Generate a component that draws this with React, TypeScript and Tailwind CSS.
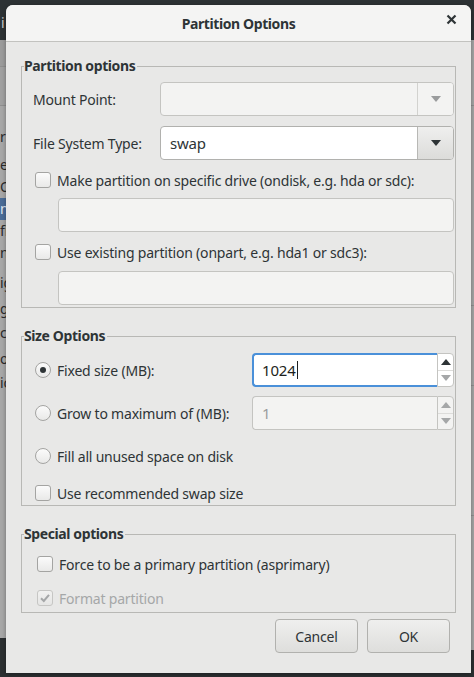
import React from 'react';

const font = { fontFamily: '"Noto Sans", "DejaVu Sans", sans-serif' };

function Arrow({ up = false, color }: { up?: boolean; color: string }) {
  return (
    <svg width="10" height="6" viewBox="0 0 10 6">
      <path d={up ? 'M0 6 L5 0 L10 6 Z' : 'M0 0 L10 0 L5 6 Z'} fill={color} />
    </svg>
  );
}

function Check({ checked = false, disabled = false }: { checked?: boolean; disabled?: boolean }) {
  return (
    <span
      className={
        'flex h-[16px] w-[16px] shrink-0 items-center justify-center rounded-[3px] border bg-gradient-to-b ' +
        (disabled ? 'border-[#c6c6c4] from-[#f1f1f0] to-[#e6e6e5]' : 'border-[#a4a4a2] from-[#fbfbfb] to-[#e9e9e8]')
      }
    >
      {checked && (
        <svg width="12" height="12" viewBox="0 0 12 12">
          <path d="M2 6.2 L4.8 9 L10 2.8" stroke={disabled ? '#a5a7a8' : '#2e3436'} strokeWidth="2" fill="none" />
        </svg>
      )}
    </span>
  );
}

function Radio({ on = false }: { on?: boolean }) {
  return (
    <span className="flex h-[16px] w-[16px] shrink-0 items-center justify-center rounded-full border border-[#a4a4a2] bg-gradient-to-b from-[#fbfbfb] to-[#e9e9e8]">
      {on && <span className="h-[6px] w-[6px] rounded-full bg-[#2e3436]" />}
    </span>
  );
}

function Combo({ value, disabled = false }: { value?: string; disabled?: boolean }) {
  return (
    <div
      className={
        'flex h-[34px] w-[294px] overflow-hidden rounded-[4px] border ' +
        (disabled ? 'border-[#c4c4c1] bg-[#f3f3f2]' : 'border-[#b1b1ae] bg-white')
      }
    >
      <div className="flex flex-1 items-center pl-[9px] text-[15px] text-[#2e3436]">{value}</div>
      <div
        className={
          'flex w-[36px] items-center justify-center border-l ' +
          (disabled ? 'border-[#d2d2cf] bg-[#f3f3f2]' : 'border-[#b8b8b5] bg-gradient-to-b from-[#efefee] to-[#dcdcda]')
        }
      >
        <Arrow color={disabled ? '#9a9c9d' : '#2e3436'} />
      </div>
    </div>
  );
}

function Spin({ value, focused = false }: { value: string; focused?: boolean }) {
  return (
    <div className="flex h-[34px] w-[202px]">
      <div
        className={
          'flex flex-1 items-center rounded-l-[4px] text-[15px] ' +
          (focused
            ? 'border-2 border-r-0 border-[#4a90d9] bg-white pl-[8px] text-[#1d1f20]'
            : 'border border-r-0 border-[#c4c4c1] bg-[#f3f3f2] pl-[9px] text-[#9a9c9d]')
        }
      >
        {value}
        {focused && <span className="ml-[1px] h-[18px] w-[1px] bg-[#1d1f20]" />}
      </div>
      <div
        className={
          'flex w-[17px] flex-col rounded-r-[4px] border border-[#c4c4c1] ' + (focused ? 'bg-white' : 'bg-[#f3f3f2]')
        }
      >
        <div className="flex flex-1 items-center justify-center border-b border-[#dcdcda]">
          <Arrow up color={focused ? '#2e3436' : '#a5a7a8'} />
        </div>
        <div className="flex flex-1 items-center justify-center">
          <Arrow color="#a5a7a8" />
        </div>
      </div>
    </div>
  );
}

function Entry() {
  return <div className="ml-[36px] h-[34px] w-[396px] rounded-[4px] border border-[#c4c4c1] bg-[#f3f3f2]" />;
}

function Frame({ title, children, className = '' }: { title: string; children: React.ReactNode; className?: string }) {
  return (
    <fieldset className={'border border-[#b8b8b5] ' + className}>
      <legend className="ml-[2px] pr-[2px] text-[14px] font-bold leading-[18px] tracking-[-0.4px] text-[#2e3436]">
        {title}
      </legend>
      {children}
    </fieldset>
  );
}

export default function App() {
  return (
    <div className="relative h-[677px] w-[474px] overflow-hidden bg-[#2b2f31]" style={font}>
      {/* dimmed parent window behind the dialog */}
      <div className="flex h-full flex-col">
        <div className="h-[40px] bg-[#2d3234] pl-[1px] pt-[12px] text-[14px] text-[#c8c8c8]">i</div>
        <div className="flex flex-1">
          <div className="flex w-[6px] flex-col bg-[#a7a7a7] text-[14px] leading-[22px] text-[#2a2a2a]">
            <div className="h-[27px] border-b border-[#8f8f8f] bg-[#9b9b9b]" />
            <div className="h-[39px] border-b border-[#8f8f8f] bg-[#a0a0a0]" />
            <div className="mt-[20px]">r</div>
            <div className="mt-[6px]">e</div>
            <div>O</div>
            <div className="bg-[#4b6c97] text-[#dde4ee]">n</div>
            <div>fi</div>
            <div>n</div>
            <div className="mt-[8px]">ig</div>
            <div className="mt-[4px]">g</div>
            <div className="mt-[2px]">c</div>
            <div className="mt-[4px]">or</div>
            <div className="mt-[2px]">ic</div>
            <div className="mt-auto h-[39px] bg-[#2b2f31]" />
          </div>
          <div className="flex-1" />
          <div className="flex w-[4px] flex-col bg-[#a5a5a5]">
            <div className="h-[66px] border-b border-[#8f8f8f]" />
            <div className="h-[200px] border-b border-[#8f8f8f]" />
            <div className="h-[80px] border-b border-[#8f8f8f]" />
            <div className="h-[130px] border-b border-[#8f8f8f]" />
            <div className="mt-auto h-[27px] bg-[#2b2f31]" />
          </div>
        </div>
      </div>

      {/* dialog */}
      <div className="absolute left-[6px] top-[5px] flex h-[668px] w-[465px] flex-col overflow-hidden rounded-t-[7px] bg-[#e8e8e7] shadow-[0_1px_4px_rgba(0,0,0,0.35)]">
        <div className="relative flex h-[37px] shrink-0 items-center justify-center border-b border-[#c2c2bf] bg-[#f4f4f3]">
          <span className="text-[14px] font-bold tracking-[-0.4px] text-[#2e3436]">Partition Options</span>
          <span className="absolute right-[14px] top-[9px]">
            <svg width="11" height="11" viewBox="0 0 11 11">
              <path d="M1.5 1.5 L9.5 9.5 M9.5 1.5 L1.5 9.5" stroke="#2e3436" strokeWidth="2.2" />
            </svg>
          </span>
        </div>

        <div className="flex flex-1 flex-col px-[15px] pt-[15px] text-[14px] tracking-[-0.2px] text-[#2e3436]">
          <Frame title="Partition options">
            <div className="flex flex-col pb-[2px] pt-[7px]">
              <div className="flex items-center">
                <span className="w-[138px] pl-[11px]">Mount Point:</span>
                <Combo disabled />
              </div>
              <div className="mt-[10px] flex items-center">
                <span className="w-[138px] pl-[11px]">File System Type:</span>
                <Combo value="swap" />
              </div>
              <label className="mt-[10px] flex h-[20px] items-center gap-[6px] pl-[13px]">
                <Check />
                <span>Make partition on specific drive (ondisk, e.g. hda or sdc):</span>
              </label>
              <div className="mt-[8px]">
                <Entry />
              </div>
              <label className="mt-[10px] flex h-[20px] items-center gap-[6px] pl-[13px]">
                <Check />
                <span>Use existing partition (onpart, e.g. hda1 or sdc3):</span>
              </label>
              <div className="mt-[9px]">
                <Entry />
              </div>
            </div>
          </Frame>

          <Frame title="Size Options" className="mt-[19px]">
            <div className="flex flex-col pb-[2px] pt-[8px]">
              <div className="flex items-center">
                <label className="flex w-[230px] items-center gap-[6px] pl-[13px]">
                  <Radio on />
                  <span>Fixed size (MB):</span>
                </label>
                <Spin value="1024" focused />
              </div>
              <div className="mt-[9px] flex items-center">
                <label className="flex w-[230px] items-center gap-[6px] pl-[13px]">
                  <Radio />
                  <span>Grow to maximum of (MB):</span>
                </label>
                <Spin value="1" />
              </div>
              <label className="mt-[16px] flex h-[20px] items-center gap-[6px] pl-[13px]">
                <Radio />
                <span>Fill all unused space on disk</span>
              </label>
              <label className="mt-[17px] flex h-[20px] items-center gap-[6px] pl-[13px]">
                <Check />
                <span>Use recommended swap size</span>
              </label>
            </div>
          </Frame>

          <Frame title="Special options" className="mt-[19px]">
            <div className="flex flex-col pb-[4px] pt-[11px]">
              <label className="flex h-[20px] items-center gap-[6px] pl-[15px]">
                <Check />
                <span>Force to be a primary partition (asprimary)</span>
              </label>
              <label className="mt-[14px] flex h-[20px] items-center gap-[6px] pl-[15px] text-[#a5a7a8]">
                <Check checked disabled />
                <span>Format partition</span>
              </label>
            </div>
          </Frame>

          <div className="mt-[6px] flex justify-end gap-[9px] pr-[6px]">
            <button className="h-[34px] w-[83px] rounded-[4px] border border-[#b1b1ae] bg-gradient-to-b from-[#efefee] to-[#dededc] text-[14px] text-[#2e3436]">
              Cancel
            </button>
            <button className="h-[34px] w-[83px] rounded-[4px] border border-[#b1b1ae] bg-gradient-to-b from-[#efefee] to-[#dededc] text-[14px] text-[#2e3436]">
              OK
            </button>
          </div>
        </div>
      </div>
    </div>
  );
}
